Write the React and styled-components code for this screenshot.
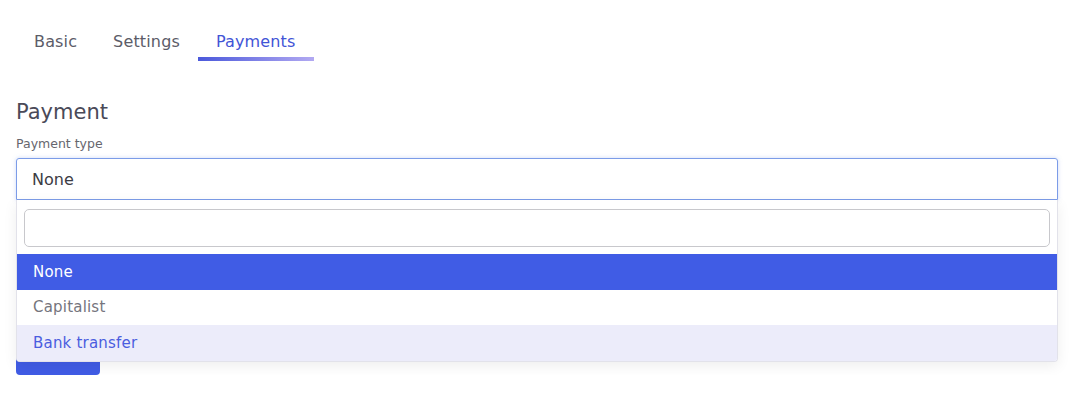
import React, { useState } from 'react';
import styled, { createGlobalStyle } from 'styled-components';

const GlobalStyle = createGlobalStyle`
  body {
    margin: 0;
    background: #fff;
    font-family: 'DejaVu Sans', 'Open Sans', sans-serif;
  }
`;

const Page = styled.div`
  padding: 0 22px 0 16px;
`;

const Tabs = styled.div`
  display: flex;
  padding-top: 30px;
`;

const Tab = styled.div`
  padding: 0 18px 3px 18px;
  height: 24px;
  font-size: 16px;
  letter-spacing: 0.15px;
  color: ${(p) => (p.active ? '#4254d6' : '#5c5c68')};
  cursor: pointer;
  line-height: 24px;
  border-bottom: 4px solid transparent;
  border-image: ${(p) =>
    p.active ? 'linear-gradient(90deg, #4a58db, #b3aaf2) 1' : 'none'};
`;

const Heading = styled.h2`
  margin: 39px 0 0 0;
  font-size: 21px;
  font-weight: 500;
  color: #4a4a58;
  line-height: 24px;
`;

const Label = styled.label`
  display: block;
  margin-top: 12px;
  font-size: 12.5px;
  color: #66666e;
  line-height: 16px;
`;

const Field = styled.div`
  position: relative;
  margin-top: 6px;
`;

const Select = styled.div`
  height: 42px;
  box-sizing: border-box;
  border: 1px solid #7c9ce8;
  border-radius: 3px 3px 0 0;
  box-shadow: 0 0 4px rgba(120, 150, 230, 0.35);
  padding: 0 15px;
  display: flex;
  align-items: center;
  font-size: 16px;
  color: #3c3c44;
`;

const Dropdown = styled.div`
  position: absolute;
  left: 0;
  right: 0;
  top: 100%;
  background: #fff;
  border: 1px solid #e2e2ea;
  border-top: none;
  border-radius: 0 0 4px 4px;
  box-shadow: 0 4px 14px rgba(0, 0, 0, 0.07);
  z-index: 2;
  overflow: hidden;
`;

const SearchWrap = styled.div`
  padding: 9px 7px 7px 7px;
`;

const Search = styled.input`
  display: block;
  width: 100%;
  box-sizing: border-box;
  height: 38px;
  border: 1px solid #c8c8cc;
  border-radius: 5px;
  outline: none;
  font-size: 15px;
`;

const Option = styled.div`
  height: 35.5px;
  display: flex;
  align-items: center;
  padding: 0 16px;
  font-size: 15px;
  letter-spacing: 0.2px;
  background: ${(p) => (p.selected ? '#405ce5' : p.hover ? '#ececfa' : '#fff')};
  color: ${(p) => (p.selected ? '#fff' : p.hover ? '#4a5ddf' : '#75757d')};
`;

const SaveButton = styled.button`
  display: block;
  margin-top: 139px;
  width: 84px;
  height: 36px;
  border: none;
  border-radius: 4px;
  background: #405ce5;
`;

const options = ['None', 'Capitalist', 'Bank transfer'];

function App() {
  const [value] = useState('None');
  return (
    <>
      <GlobalStyle />
      <Page>
        <Tabs>
          <Tab>Basic</Tab>
          <Tab>Settings</Tab>
          <Tab active>Payments</Tab>
        </Tabs>
        <Heading>Payment</Heading>
        <Label>Payment type</Label>
        <Field>
          <Select>{value}</Select>
          <Dropdown>
            <SearchWrap>
              <Search />
            </SearchWrap>
            {options.map((o) => (
              <Option key={o} selected={o === value} hover={o === 'Bank transfer'}>
                {o}
              </Option>
            ))}
          </Dropdown>
        </Field>
        <SaveButton aria-label="Save" />
      </Page>
    </>
  );
}

export default App;
